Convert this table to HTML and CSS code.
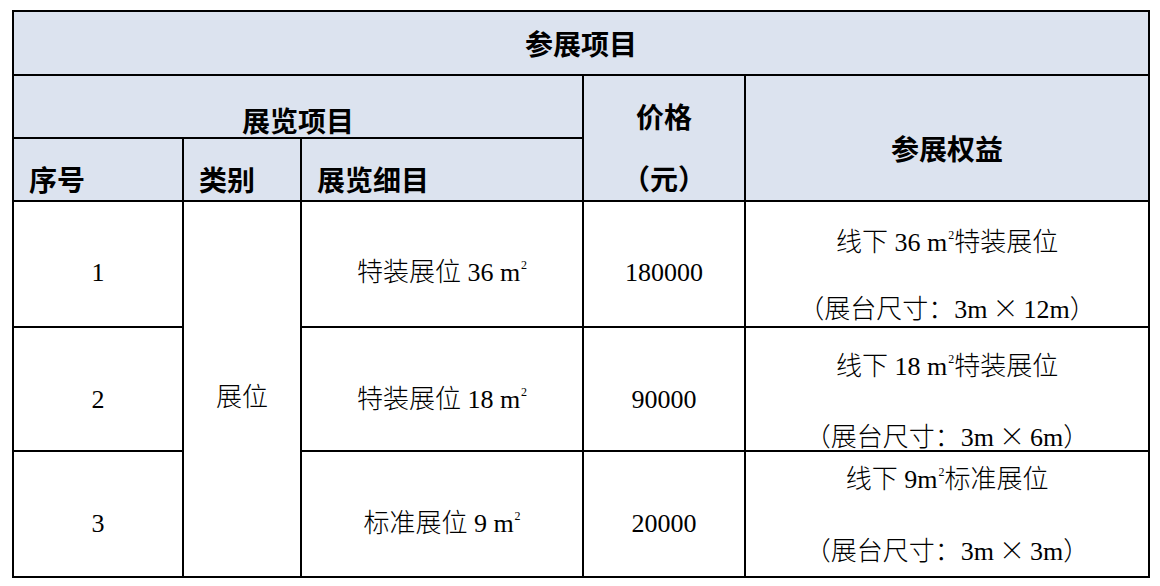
FILE: index.html
```html
<!DOCTYPE html>
<html lang="zh-CN">
<head>
<meta charset="utf-8">
<title>参展项目</title>
<link rel="stylesheet" href="styles.css">
</head>
<body>
<table class="fee">
  <colgroup>
    <col class="c-no">
    <col class="c-cat">
    <col class="c-item">
    <col class="c-price">
    <col class="c-rights">
  </colgroup>
  <thead>
    <tr class="r-title">
      <th colspan="5" class="title">参展项目</th>
    </tr>
    <tr class="r-group">
      <th colspan="3" class="group">展览项目</th>
      <th rowspan="2" class="price-h"><div class="stack hstack"><span>价格</span><span>（元）</span></div></th>
      <th rowspan="2" class="rights-h">参展权益</th>
    </tr>
    <tr class="r-sub">
      <th class="sub">序号</th>
      <th class="sub">类别</th>
      <th class="sub">展览细目</th>
    </tr>
  </thead>
  <tbody>
    <tr class="r1">
      <td class="one">1</td>
      <td rowspan="3" class="cat">展位</td>
      <td class="one">特装展位 36 m<sup>2</sup></td>
      <td class="one">180000</td>
      <td class="two"><div class="stack"><span>线下 36 m<sup>2</sup>特装展位</span><span>（展台尺寸：3m<span class="x">×</span>12m）</span></div></td>
    </tr>
    <tr class="r2">
      <td class="one">2</td>
      <td class="one">特装展位 18 m<sup>2</sup></td>
      <td class="one">90000</td>
      <td class="two"><div class="stack"><span>线下 18 m<sup>2</sup>特装展位</span><span>（展台尺寸：3m<span class="x">×</span>6m）</span></div></td>
    </tr>
    <tr class="r3">
      <td class="one">3</td>
      <td class="one">标准展位 9 m<sup>2</sup></td>
      <td class="one">20000</td>
      <td class="two"><div class="stack"><span>线下 9m<sup>2</sup>标准展位</span><span>（展台尺寸：3m<span class="x">×</span>3m）</span></div></td>
    </tr>
  </tbody>
</table>
</body>
</html>
```

FILE: styles.css
```css
html, body {
  margin: 0;
  padding: 0;
  background: #ffffff;
}

body {
  padding: 10px 0 0 12px;
  font-family: "Liberation Serif", "Noto Sans CJK SC", serif;
  font-size: 26px;
  color: #000;
}

.fee {
  border-collapse: collapse;
  table-layout: fixed;
  width: 1138px;
}

.c-no { width: 170px; }
.c-cat { width: 118px; }
.c-item { width: 282px; }
.c-price { width: 162px; }
.c-rights { width: 404px; }

.fee th,
.fee td {
  border: 2px solid #000;
  padding: 0;
  vertical-align: top;
  text-align: center;
  line-height: 28px;
  white-space: nowrap;
}

.fee th {
  background: #dce3ef;
  font-family: "Noto Sans CJK SC", sans-serif;
  font-size: 28px;
  font-weight: 700;
}

.fee td {
  font-family: "Liberation Serif", "Noto Sans CJK SC", serif;
  font-weight: 300;
}

.r-title { height: 64px; }
.r-group { height: 63px; }
.r-sub { height: 63px; }
.r1 { height: 126px; }
.r2 { height: 124px; }
.r3 { height: 126px; }

.fee .title {
  vertical-align: middle;
}

.fee .group {
  padding-top: 30px;
}

.fee .sub {
  text-align: left;
  padding: 26px 0 0 15px;
}

.fee .price-h {
  padding-top: 26px;
}

.fee .rights-h {
  padding-top: 58px;
}

.stack {
  display: flex;
  flex-direction: column;
  align-items: center;
}

.hstack {
  gap: 34px;
}

.fee .r1 .one { padding-top: 57px; }
.fee .r2 .one { padding-top: 58px; }
.fee .r3 .one { padding-top: 58px; }

.fee .two {
  line-height: 24px;
}

.fee .r1 .two { padding-top: 29px; }
.r1 .two .stack { gap: 40px; }
.fee .r2 .two { padding-top: 27px; }
.r2 .two .stack { gap: 44px; }
.fee .r3 .two { padding-top: 16px; }
.r3 .two .stack { gap: 45px; }

.fee .cat {
  padding-top: 182px;
}

.x {
  font-family: "Noto Sans CJK SC", sans-serif;
  margin: 0 5px;
}

sup {
  font-size: 12px;
  line-height: 0;
  vertical-align: 0;
  position: relative;
  top: -12px;
  margin-left: 1px;
}
```
